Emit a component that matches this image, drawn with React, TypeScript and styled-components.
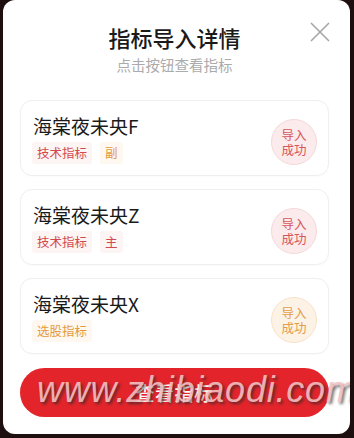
import React from "react";
import styled, { createGlobalStyle } from "styled-components";

type Tone = "red" | "orange";

interface Indicator {
  name: string;
  tags: { label: string; tone: Tone }[];
  tone: Tone;
}

const indicators: Indicator[] = [
  {
    name: "海棠夜未央F",
    tags: [
      { label: "技术指标", tone: "red" },
      { label: "副", tone: "orange" },
    ],
    tone: "red",
  },
  {
    name: "海棠夜未央Z",
    tags: [
      { label: "技术指标", tone: "red" },
      { label: "主", tone: "red" },
    ],
    tone: "red",
  },
  {
    name: "海棠夜未央X",
    tags: [{ label: "选股指标", tone: "orange" }],
    tone: "orange",
  },
];

const App: React.FC = () => {
  return (
    <>
      <GlobalStyle />
      <Modal>
        <CloseButton aria-label="close">
          <svg width="20" height="20" viewBox="0 0 20 20">
            <path d="M1 1 L19 19 M19 1 L1 19" stroke="#a6a6a6" strokeWidth="1.6" fill="none" />
          </svg>
        </CloseButton>

        <Title>指标导入详情</Title>
        <Subtitle>点击按钮查看指标</Subtitle>

        <List>
          {indicators.map((item) => (
            <Card key={item.name}>
              <Info>
                <Name>{item.name}</Name>
                <Tags>
                  {item.tags.map((t) => (
                    <Tag key={t.label} $tone={t.tone}>
                      {t.label}
                    </Tag>
                  ))}
                </Tags>
              </Info>
              <Badge $tone={item.tone}>
                <BadgeLine>导入</BadgeLine>
                <BadgeLine>成功</BadgeLine>
              </Badge>
            </Card>
          ))}
        </List>

        <ViewButton>查看指标</ViewButton>

        <Watermark>www.zhibiaodi.com</Watermark>
      </Modal>
    </>
  );
};

export default App;

/* ---------------- Styled Components ---------------- */

const GlobalStyle = createGlobalStyle`
  html, body {
    margin: 0;
    padding: 0;
    background: #1d0f0f;
    font-family: "Noto Sans CJK SC", "Noto Sans", sans-serif;
  }
  * {
    box-sizing: border-box;
  }
`;

const Modal = styled.div`
  position: relative;
  width: 347px;
  height: 434px;
  margin-left: 3px;
  background: #ffffff;
  border-radius: 12px;
  padding: 0 21px 0 17px;
  display: flex;
  flex-direction: column;
  overflow: hidden;
`;

const CloseButton = styled.button`
  position: absolute;
  top: 22px;
  right: 20px;
  width: 20px;
  height: 20px;
  padding: 0;
  border: none;
  background: none;
  display: flex;
`;

const Title = styled.h1`
  margin: 23px 0 0;
  font-size: 22px;
  line-height: 28px;
  font-weight: 500;
  color: #1a1a1a;
  text-align: center;
`;

const Subtitle = styled.p`
  margin: 4px 0 0;
  font-size: 14.5px;
  line-height: 20px;
  color: #ababab;
  text-align: center;
`;

const List = styled.div`
  margin-top: 25px;
  display: flex;
  flex-direction: column;
  gap: 13px;
`;

const Card = styled.div`
  height: 76px;
  border: 1px solid #f0eeee;
  border-radius: 12px;
  padding: 0 11px 0 11px;
  display: flex;
  align-items: center;
  justify-content: space-between;
  box-shadow: 0 1px 3px rgba(0, 0, 0, 0.02);
`;

const Info = styled.div`
  display: flex;
  flex-direction: column;
  gap: 3px;
`;

const Name = styled.div`
  font-size: 19px;
  line-height: 26px;
  color: #1a1a1a;
  padding-left: 1px;
`;

const Tags = styled.div`
  display: flex;
  gap: 8px;
`;

const Tag = styled.span<{ $tone: Tone }>`
  height: 22px;
  padding: 0 5px;
  border-radius: 3px;
  font-size: 12.5px;
  line-height: 22px;
  color: ${(p) => (p.$tone === "red" ? "#d2494d" : "#e49a3c")};
  background: ${(p) => (p.$tone === "red" ? "#fdf4f4" : "#fef8f0")};
`;

const Badge = styled.div<{ $tone: Tone }>`
  width: 46px;
  height: 46px;
  margin-top: 8px;
  border-radius: 50%;
  display: flex;
  flex-direction: column;
  align-items: center;
  justify-content: center;
  color: ${(p) => (p.$tone === "red" ? "#d6575b" : "#e39d4a")};
  background: ${(p) => (p.$tone === "red" ? "#fcebec" : "#fdf2e6")};
  border: 1px solid ${(p) => (p.$tone === "red" ? "#f4d8d9" : "#f8e2c9")};
`;

const BadgeLine = styled.span`
  display: block;
  font-size: 12.5px;
  line-height: 15px;
`;

const ViewButton = styled.button`
  margin-top: 14px;
  height: 49px;
  border: none;
  border-radius: 25px;
  background: #e3252b;
  color: #ffffff;
  font-family: "Noto Sans CJK SC", "Noto Sans", sans-serif;
  font-size: 19px;
  font-weight: 500;
  letter-spacing: 0.5px;
`;

const Watermark = styled.div`
  position: absolute;
  left: 34px;
  top: 368px;
  font-family: "Liberation Sans", Arial, sans-serif;
  font-style: italic;
  font-size: 36px;
  line-height: 44px;
  letter-spacing: 0.8px;
  color: rgba(245, 195, 198, 0.88);
  text-shadow: 2px 2px 3px rgba(40, 40, 40, 0.7);
  pointer-events: none;
  white-space: nowrap;
`;
